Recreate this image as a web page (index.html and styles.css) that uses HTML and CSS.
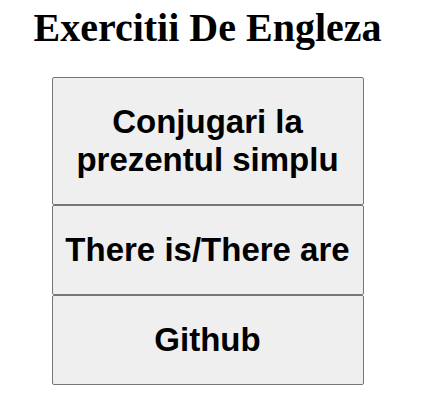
FILE: index.html
```html
<!DOCTYPE html>
<html lang="en">
<head>
    <meta charset="UTF-8">
    <title>Exercitii De Engleza</title>
    <link rel="stylesheet" href="styles.css">
</head>
<body>
    <div class="container">
        <h1>Exercitii De Engleza</h1>
        <div class="menu">
            <button class="menu-btn">Conjugari la prezentul simplu</button>
            <button class="menu-btn">There is/There are</button>
            <button class="menu-btn">Github</button>
        </div>
    </div>
</body>
</html>
```

FILE: styles.css
```css
body {
    margin: 0;
    background: #fff;
    font-family: 'Liberation Serif', 'Times New Roman', serif;
}
.container {
    width: 415px;
}
h1 {
    text-align: center;
    font-size: 40px;
    margin: 4px 0 26px;
}
.menu {
    display: flex;
    flex-direction: column;
    align-items: center;
}
.menu-btn {
    width: 312px;
    padding: 25px 10px;
    background: #efefef;
    border: 1px solid #767676;
    border-radius: 2px;
    font-family: 'Liberation Sans', Arial, sans-serif;
    font-size: 33px;
    font-weight: bold;
    color: #000;
}
```
